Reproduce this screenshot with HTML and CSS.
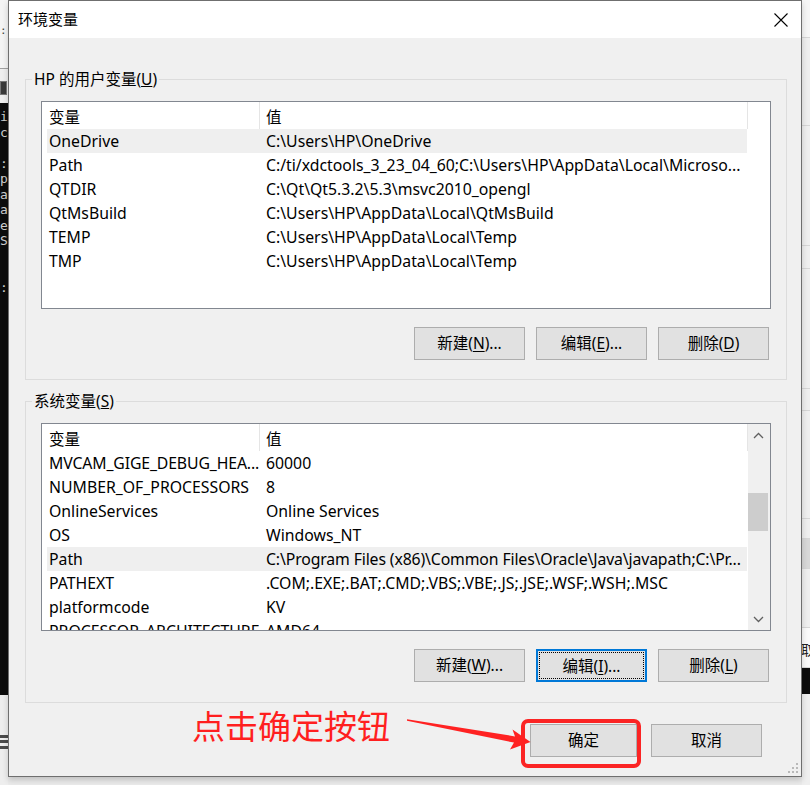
FILE: index.html
```html
<!DOCTYPE html>
<html lang="zh-CN">
<head>
<meta charset="utf-8">
<title>环境变量</title>
<link rel="stylesheet" href="styles.css">
</head>
<body>
<div class="strip-left">
  <div class="ls-top"><span class="ls-dots">:</span></div>
  <div class="ls-mid"><span class="ls-icon"></span></div>
  <div class="ls-term"><pre>i
c

:
p
a
a
e
S


:</pre></div>
  <div class="ls-bot"><span class="ls-lines"></span></div>
</div>

<div class="dialog">
  <div class="titlebar">
    <span class="title">环境变量</span>
    <span class="close">
      <svg width="14" height="14" viewBox="0 0 14 14"><path d="M0.5 0.5 L13.5 13.5 M13.5 0.5 L0.5 13.5" stroke="#000" stroke-width="1.1" fill="none"/></svg>
    </span>
  </div>
  <div class="content">
    <fieldset class="group">
      <legend>HP 的用户变量(<u>U</u>)</legend>
      <div class="list">
        <div class="list-main">
          <div class="lv-header"><div class="hcell">变量</div><div class="hcell">值</div></div>
          <div class="lv-row sel"><div class="cell">OneDrive</div><div class="cell v">C:\Users\HP\OneDrive</div></div>
          <div class="lv-row"><div class="cell">Path</div><div class="cell v">C:/ti/xdctools_3_23_04_60;C:\Users\HP\AppData\Local\Microso...</div></div>
          <div class="lv-row"><div class="cell">QTDIR</div><div class="cell v">C:\Qt\Qt5.3.2\5.3\msvc2010_opengl</div></div>
          <div class="lv-row"><div class="cell">QtMsBuild</div><div class="cell v">C:\Users\HP\AppData\Local\QtMsBuild</div></div>
          <div class="lv-row"><div class="cell">TEMP</div><div class="cell v">C:\Users\HP\AppData\Local\Temp</div></div>
          <div class="lv-row"><div class="cell">TMP</div><div class="cell v">C:\Users\HP\AppData\Local\Temp</div></div>
        </div>
      </div>
      <div class="btn-row">
        <button class="btn">新建(<u>N</u>)...</button>
        <button class="btn">编辑(<u>E</u>)...</button>
        <button class="btn">删除(<u>D</u>)</button>
      </div>
    </fieldset>

    <fieldset class="group group2">
      <legend>系统变量(<u>S</u>)</legend>
      <div class="list">
        <div class="list-main">
          <div class="lv-header"><div class="hcell">变量</div><div class="hcell">值</div></div>
          <div class="lv-row"><div class="cell fit">MVCAM_GIGE_DEBUG_HEA...</div><div class="cell v">60000</div></div>
          <div class="lv-row"><div class="cell">NUMBER_OF_PROCESSORS</div><div class="cell v">8</div></div>
          <div class="lv-row"><div class="cell">OnlineServices</div><div class="cell v">Online Services</div></div>
          <div class="lv-row"><div class="cell">OS</div><div class="cell v">Windows_NT</div></div>
          <div class="lv-row sel"><div class="cell">Path</div><div class="cell v fit">C:\Program Files (x86)\Common Files\Oracle\Java\javapath;C:\Pr...</div></div>
          <div class="lv-row"><div class="cell">PATHEXT</div><div class="cell v">.COM;.EXE;.BAT;.CMD;.VBS;.VBE;.JS;.JSE;.WSF;.WSH;.MSC</div></div>
          <div class="lv-row"><div class="cell">platformcode</div><div class="cell v">KV</div></div>
          <div class="lv-row"><div class="cell">PROCESSOR_ARCHITECTURE</div><div class="cell v">AMD64</div></div>
        </div>
        <div class="vscroll">
          <div class="arrow">
            <svg width="11" height="7" viewBox="0 0 11 7"><path d="M1 6 L5.5 1.5 L10 6" stroke="#606060" stroke-width="1.3" fill="none"/></svg>
          </div>
          <div class="track"><div class="thumb"></div></div>
          <div class="arrow">
            <svg width="11" height="7" viewBox="0 0 11 7"><path d="M1 1 L5.5 5.5 L10 1" stroke="#606060" stroke-width="1.3" fill="none"/></svg>
          </div>
        </div>
      </div>
      <div class="btn-row">
        <button class="btn">新建(<u>W</u>)...</button>
        <button class="btn focus">编辑(<u>I</u>)...</button>
        <button class="btn">删除(<u>L</u>)</button>
      </div>
    </fieldset>

    <div class="footer">
      <button class="btn ok">确定</button>
      <button class="btn">取消</button>
    </div>
  </div>
  <svg class="grip" width="12" height="12" viewBox="0 0 12 12">
    <rect x="10" y="2" width="2" height="2" fill="#b9b9b9"/>
    <rect x="6" y="6" width="2" height="2" fill="#b9b9b9"/>
    <rect x="10" y="6" width="2" height="2" fill="#b9b9b9"/>
    <rect x="2" y="10" width="2" height="2" fill="#b9b9b9"/>
    <rect x="6" y="10" width="2" height="2" fill="#b9b9b9"/>
    <rect x="10" y="10" width="2" height="2" fill="#b9b9b9"/>
  </svg>
</div>

<div class="strip-right">
  <div class="rs b1"></div>
  <div class="rs b2"></div>
  <div class="rs b3"></div>
  <div class="rs b4"></div>
  <div class="rs b5"></div>
  <div class="rs b6"></div>
  <div class="rs b7"></div>
  <div class="rs b8"></div>
  <div class="rs b9"></div>
  <div class="rs b10"></div>
  <div class="rs b11"><span>取</span></div>
  <div class="rs b12"></div>
  <div class="rs b13"></div>
</div>

<div class="annot-text">点击确定按钮</div>
<div class="annot-box"></div>
<svg class="annot-arrow" width="810" height="785" viewBox="0 0 810 785">
  <polygon points="407,719.2 515,736.4 512.5,729.5 530.5,742 510,749.5 514,742.6 407,720.8" fill="#ff2222"/>
</svg>
</body>
</html>
```

FILE: styles.css
```css
* { box-sizing: border-box; }

html, body {
  margin: 0;
  padding: 0;
}

body {
  position: relative;
  width: 810px;
  height: 785px;
  overflow: hidden;
  display: grid;
  grid-template-columns: 8px 794px 8px;
  grid-template-rows: 785px;
  background: #ebebeb;
  font-family: "Noto Sans", "Noto Sans CJK SC", sans-serif;
  font-size: 15.8px;
  color: #000;
}

/* ---------- background windows ---------- */
.strip-left {
  display: flex;
  flex-direction: column;
  overflow: hidden;
}
.ls-top {
  height: 69px;
  background: #f4f4f4;
  border-bottom: 1px solid #a0a0a0;
  padding-top: 24px;
}
.ls-dots {
  display: block;
  font-family: "DejaVu Sans Mono", monospace;
  font-size: 11px;
  line-height: 14px;
  color: #444;
}
.ls-mid {
  height: 34px;
  background: #efefef;
  padding-top: 12px;
}
.ls-icon {
  display: block;
  width: 7px;
  height: 14px;
  background: #3a3a3a;
  border: 1px solid #777;
}
.ls-term {
  height: 592px;
  background: #0c0c0c;
}
.ls-term pre {
  margin: 0;
  padding: 6px 0 0 0;
  font-family: "DejaVu Sans Mono", monospace;
  font-size: 13px;
  line-height: 15.5px;
  color: #cfcfcf;
}
.ls-bot {
  flex: 1;
  background: #eeeeee;
  padding-top: 40px;
}
.ls-lines {
  display: block;
  width: 8px;
  height: 14px;
  border-top: 3px solid #4a4a4a;
  border-bottom: 3px solid #4a4a4a;
  background: linear-gradient(#eeeeee 0 2px, #4a4a4a 2px 5px, #eeeeee 5px);
}

.strip-right {
  display: flex;
  flex-direction: column;
  background: #efefef;
  overflow: hidden;
}
.rs { border-bottom: 1px solid #d6d6d6; }
.b1 { height: 38px; background: #f6f6f6; }
.b2 { height: 88px; }
.b3 { height: 120px; }
.b4 { height: 23px; }
.b5 { height: 120px; }
.b6 { height: 22px; }
.b7 { height: 108px; }
.b8 { height: 20px; }
.b9 { height: 30px; background: #d8d8d8; }
.b10 { height: 59px; }
.b11 { height: 40px; background: #fafafa; padding-top: 10px; }
.b11 span { font-size: 14px; margin-left: -1px; color: #222; }
.b12 { height: 26px; background: #0c0c0c; border: none; }
.b13 { flex: 1; border: none; }

/* ---------- dialog ---------- */
.dialog {
  position: relative;
  z-index: 1;
  height: 777px;
  border: 1px solid #6f6f6f;
  background: #f0f0f0;
  box-shadow: 0 3px 6px rgba(0, 0, 0, 0.18);
  display: flex;
  flex-direction: column;
}

.titlebar {
  height: 37px;
  background: #fff;
  display: flex;
  align-items: center;
  justify-content: space-between;
  padding-left: 9px;
}
.title {
  font-size: 15px;
  line-height: 37px;
}
.close {
  width: 41px;
  height: 37px;
  display: flex;
  align-items: center;
  justify-content: center;
}

.content {
  padding: 31px 14px 0 16px;
  display: flex;
  flex-direction: column;
}

.group {
  margin: 0;
  padding: 0 0 19px 0;
  border: 1px solid #dcdcdc;
  min-width: 0;
}
.group2 { margin-top: 11px; padding-bottom: 20px; }
.group legend {
  margin-left: 6px;
  padding: 0 2px;
  font-size: 15.5px;
  line-height: 20px;
}

.list {
  margin: 12px 15px 0 15px;
  height: 208px;
  border: 1px solid #828790;
  background: #fff;
  display: flex;
  overflow: hidden;
}
.list-main {
  flex: 1;
  min-width: 0;
  overflow: hidden;
}

.lv-header {
  display: grid;
  grid-template-columns: 218px 488px;
  height: 27px;
}
.hcell {
  border-right: 1px solid #e5e5e5;
  padding: 3px 0 0 7px;
  line-height: 24px;
  white-space: nowrap;
  font-size: 15.5px;
}
.hcell + .hcell { padding-left: 6px; }

.lv-row {
  display: grid;
  grid-template-columns: 212px 488px;
  width: 700px;
  margin-left: 5px;
  height: 24px;
  line-height: 24px;
}
.lv-row.sel { background: #efefef; }
.cell {
  padding-left: 2px;
  white-space: nowrap;
  overflow: hidden;
}
.cell.v { padding-left: 7px; }
.cell.fit { letter-spacing: -0.13px; }

.vscroll {
  width: 22px;
  background: #f0f0f0;
  display: flex;
  flex-direction: column;
}
.arrow {
  height: 22px;
  display: flex;
  align-items: center;
  justify-content: center;
  padding-right: 2px;
}
.track {
  flex: 1;
  padding-top: 47px;
}
.thumb {
  width: 20px;
  height: 38px;
  background: #cdcdcd;
}

.btn-row {
  display: flex;
  justify-content: flex-end;
  gap: 11px;
  margin-top: 18px;
  padding-right: 17px;
}

.btn {
  width: 111px;
  height: 33px;
  margin: 0;
  padding: 0;
  border: 1px solid #adadad;
  background: #e1e1e1;
  font-family: inherit;
  font-size: 15.5px;
  color: #000;
  line-height: 31px;
  white-space: nowrap;
}
.btn u { text-underline-offset: 2px; }
.btn.focus {
  border: 2px solid #0078d7;
  outline: 1px dotted #000;
  outline-offset: -4px;
}

.footer {
  display: flex;
  justify-content: flex-end;
  gap: 14px;
  margin-top: 21px;
  padding-right: 25px;
}
.btn.ok { width: 107px; }

.grip {
  position: absolute;
  right: 3px;
  bottom: 3px;
}

/* ---------- annotation overlay ---------- */
.annot-text {
  position: absolute;
  left: 192px;
  top: 709px;
  font-family: "Noto Sans CJK SC", sans-serif;
  font-size: 33px;
  line-height: 33px;
  color: #ff1f1f;
  white-space: nowrap;
  z-index: 2;
}
.annot-box {
  position: absolute;
  left: 521px;
  top: 719px;
  width: 120px;
  height: 49px;
  border: 4px solid #fb2424;
  border-radius: 7px;
  z-index: 2;
}
.annot-arrow {
  position: absolute;
  left: 0;
  top: 0;
  z-index: 3;
  pointer-events: none;
}
```
